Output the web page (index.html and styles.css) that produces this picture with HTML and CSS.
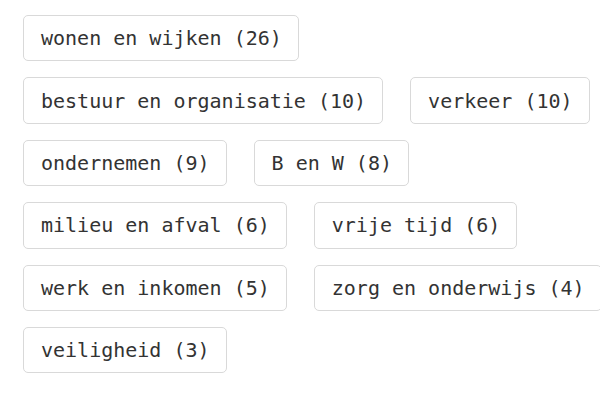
FILE: index.html
```html
<!DOCTYPE html>
<html lang="nl">
<head>
<meta charset="utf-8">
<title>Onderwerpen</title>
<link rel="stylesheet" href="styles.css">
</head>
<body>
<div class="tags">
  <a class="tag" href="#">wonen en wijken (26)</a>
  <a class="tag" href="#">bestuur en organisatie (10)</a>
  <a class="tag" href="#">verkeer (10)</a>
  <a class="tag" href="#">ondernemen (9)</a>
  <a class="tag" href="#">B en W (8)</a>
  <a class="tag" href="#">milieu en afval (6)</a>
  <a class="tag" href="#">vrije tijd (6)</a>
  <a class="tag" href="#">werk en inkomen (5)</a>
  <a class="tag" href="#">zorg en onderwijs (4)</a>
  <a class="tag" href="#">veiligheid (3)</a>
</div>
</body>
</html>
```

FILE: styles.css
```css
html, body {
  margin: 0;
  background: #fff;
  overflow: hidden;
}
body {
  width: 600px;
  height: 400px;
}
.tags {
  display: flex;
  flex-wrap: wrap;
  align-items: flex-start;
  column-gap: 27px;
  row-gap: 16px;
  width: 610px;
  padding: 15px 0 0 23px;
}
.tag {
  display: block;
  font-family: "DejaVu Sans Mono", "Liberation Mono", monospace;
  font-size: 20px;
  line-height: 30px;
  color: #333;
  text-decoration: none;
  white-space: nowrap;
  padding: 7.2px 16px 7.2px 17px;
  border: 1px solid #d9d9d9;
  border-radius: 5px;
  background: #fff;
}
```
